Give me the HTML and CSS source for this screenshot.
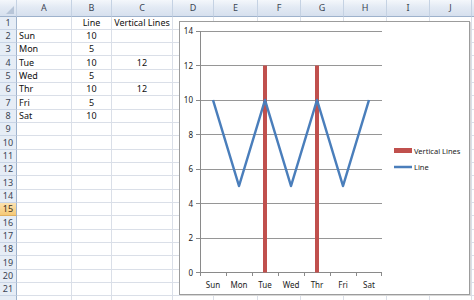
FILE: index.html
```html
<!DOCTYPE html>
<html lang="en">
<head>
  <meta charset="UTF-8" />
  <title>Vertical Lines Chart</title>
  <link rel="stylesheet" href="styles.css">
</head>
<body>
  <div class="workbook">
    <table class="sheet">
      <colgroup>
        <col class="c-head"><col class="c-a"><col class="c-b"><col class="c-c"><col class="c-d"><col class="c-e">
        <col class="c-f"><col class="c-g"><col class="c-h"><col class="c-i"><col class="c-j"><col class="c-k">
      </colgroup>
      <thead>
        <tr><th class="corner"><span class="tri"></span></th><th>A</th><th>B</th><th>C</th><th>D</th><th>E</th><th>F</th><th>G</th><th>H</th><th>I</th><th>J</th><th></th></tr>
      </thead>
      <tbody>
        <tr><th>1</th><td></td><td class="mid">Line</td><td class="mid">Vertical Lines</td><td></td><td></td><td></td><td></td><td></td><td></td><td></td><td></td></tr>
        <tr><th>2</th><td>Sun</td><td class="mid">10</td><td></td><td></td><td></td><td></td><td></td><td></td><td></td><td></td><td></td></tr>
        <tr><th>3</th><td>Mon</td><td class="mid">5</td><td></td><td></td><td></td><td></td><td></td><td></td><td></td><td></td><td></td></tr>
        <tr><th>4</th><td>Tue</td><td class="mid">10</td><td class="mid">12</td><td></td><td></td><td></td><td></td><td></td><td></td><td></td><td></td></tr>
        <tr><th>5</th><td>Wed</td><td class="mid">5</td><td></td><td></td><td></td><td></td><td></td><td></td><td></td><td></td><td></td></tr>
        <tr><th>6</th><td>Thr</td><td class="mid">10</td><td class="mid">12</td><td></td><td></td><td></td><td></td><td></td><td></td><td></td><td></td></tr>
        <tr><th>7</th><td>Fri</td><td class="mid">5</td><td></td><td></td><td></td><td></td><td></td><td></td><td></td><td></td><td></td></tr>
        <tr><th>8</th><td>Sat</td><td class="mid">10</td><td></td><td></td><td></td><td></td><td></td><td></td><td></td><td></td><td></td></tr>
        <tr><th>9</th><td></td><td></td><td></td><td></td><td></td><td></td><td></td><td></td><td></td><td></td><td></td></tr>
        <tr><th>10</th><td></td><td></td><td></td><td></td><td></td><td></td><td></td><td></td><td></td><td></td><td></td></tr>
        <tr><th>11</th><td></td><td></td><td></td><td></td><td></td><td></td><td></td><td></td><td></td><td></td><td></td></tr>
        <tr><th>12</th><td></td><td></td><td></td><td></td><td></td><td></td><td></td><td></td><td></td><td></td><td></td></tr>
        <tr><th>13</th><td></td><td></td><td></td><td></td><td></td><td></td><td></td><td></td><td></td><td></td><td></td></tr>
        <tr><th>14</th><td></td><td></td><td></td><td></td><td></td><td></td><td></td><td></td><td></td><td></td><td></td></tr>
        <tr><th class="selected">15</th><td></td><td></td><td></td><td></td><td></td><td></td><td></td><td></td><td></td><td></td><td></td></tr>
        <tr><th>16</th><td></td><td></td><td></td><td></td><td></td><td></td><td></td><td></td><td></td><td></td><td></td></tr>
        <tr><th>17</th><td></td><td></td><td></td><td></td><td></td><td></td><td></td><td></td><td></td><td></td><td></td></tr>
        <tr><th>18</th><td></td><td></td><td></td><td></td><td></td><td></td><td></td><td></td><td></td><td></td><td></td></tr>
        <tr><th>19</th><td></td><td></td><td></td><td></td><td></td><td></td><td></td><td></td><td></td><td></td><td></td></tr>
        <tr><th>20</th><td></td><td></td><td></td><td></td><td></td><td></td><td></td><td></td><td></td><td></td><td></td></tr>
        <tr><th>21</th><td></td><td></td><td></td><td></td><td></td><td></td><td></td><td></td><td></td><td></td><td></td></tr>
        <tr><th></th><td></td><td></td><td></td><td></td><td></td><td></td><td></td><td></td><td></td><td></td><td></td></tr>
      </tbody>
    </table>

    <!-- chart object floats over the cells -->
    <div class="chart">
      <svg width="289" height="272" viewBox="180 22 289 272">
        <g class="grid">
          <line x1="200" y1="31.5" x2="382" y2="31.5" />
          <line x1="200" y1="65.5" x2="382" y2="65.5" />
          <line x1="200" y1="100.5" x2="382" y2="100.5" />
          <line x1="200" y1="134.5" x2="382" y2="134.5" />
          <line x1="200" y1="169.5" x2="382" y2="169.5" />
          <line x1="200" y1="203.5" x2="382" y2="203.5" />
          <line x1="200" y1="238.5" x2="382" y2="238.5" />
        </g>
        <g class="axis">
          <line x1="200.5" y1="31" x2="200.5" y2="273" />
          <line x1="200" y1="272.5" x2="382" y2="272.5" />
          <path d="M196 31.5h4M196 65.5h4M196 100.5h4M196 134.5h4M196 169.5h4M196 203.5h4M196 238.5h4M196 272.5h4" />
          <path d="M200.5 272v4M226.5 272v4M252.5 272v4M278.5 272v4M304.5 272v4M330.5 272v4M356.5 272v4M381.5 272v4" />
        </g>
        <g class="ylabels">
          <text x="193" y="34">14</text>
          <text x="193" y="68.5">12</text>
          <text x="193" y="103">10</text>
          <text x="193" y="137.5">8</text>
          <text x="193" y="172">6</text>
          <text x="193" y="206.5">4</text>
          <text x="193" y="241">2</text>
          <text x="193" y="275.5">0</text>
        </g>
        <g class="xlabels">
          <text x="213" y="288">Sun</text>
          <text x="239" y="288">Mon</text>
          <text x="265" y="288">Tue</text>
          <text x="291" y="288">Wed</text>
          <text x="317" y="288">Thr</text>
          <text x="343" y="288">Fri</text>
          <text x="369" y="288">Sat</text>
        </g>
        <rect class="bar" x="263" y="65.5" width="4" height="207" />
        <rect class="bar" x="315" y="65.5" width="4" height="207" />
        <polyline class="series" points="213,100 239,186 265,100 291,186 317,100 343,186 369,100" />
        <g class="legend">
          <rect class="bar" x="394" y="148" width="18" height="5" />
          <text x="414" y="153.5">Vertical Lines</text>
          <line class="series" x1="394" y1="167" x2="412" y2="167" />
          <text x="414" y="169.5">Line</text>
        </g>
      </svg>
    </div>
  </div>
</body>
</html>
```
FILE: styles.css
```css
body {
  margin: 0;
  overflow: hidden;
  background: #fff;
  font-family: "Noto Sans", sans-serif;
}

.workbook {
  position: relative;
  width: 474px;
  height: 300px;
  overflow: hidden;
}

.sheet {
  table-layout: fixed;
  border-collapse: separate;
  border-spacing: 0;
  width: 522px;
  font-size: 9px;
  color: #111;
}

.c-head { width: 17px; }
.c-a { width: 55px; }
.c-b { width: 40px; }
.c-c { width: 61px; }
.c-d { width: 41px; }
.c-e { width: 44px; }
.c-f { width: 43px; }
.c-g { width: 43px; }
.c-h { width: 43px; }
.c-i { width: 43px; }
.c-j { width: 42px; }
.c-k { width: 50px; }

.sheet td {
  height: 13.33px;
  padding: 0 0 0 2px;
  box-sizing: border-box;
  border-right: 1px solid #dadfe8;
  border-bottom: 1px solid #dadfe8;
  white-space: nowrap;
  overflow: hidden;
  line-height: 12px;
}

.sheet td.mid {
  text-align: center;
  padding: 0;
}

.sheet th {
  padding: 0;
  font-weight: normal;
  color: #3b4453;
  background: linear-gradient(#eef3fa, #dce6f3);
  border-right: 1px solid #b3c3d8;
  border-bottom: 1px solid #b3c3d8;
  line-height: 12px;
}

.sheet thead th {
  height: 16.5px;
  box-sizing: border-box;
  background: linear-gradient(#f4f7fb 0%, #e3eaf4 45%, #d6e0ee 100%);
  border-right-color: #c5d2e3;
  border-bottom-color: #9eb2cc;
}

.sheet tbody th {
  background: #e6edf6;
  border-bottom-color: #c9d5e6;
  border-right-color: #9eb2cc;
  text-align: center;
}

.sheet tbody th.selected {
  background: linear-gradient(#fbe2b0, #f5c977);
  color: #3a2f1c;
  border-bottom-color: #e0b060;
}

.sheet th.corner {
  position: relative;
}

.tri {
  position: absolute;
  right: 2px;
  bottom: 2px;
  width: 0;
  height: 0;
  border-left: 8px solid transparent;
  border-bottom: 8px solid #b7c5d8;
}

.chart {
  position: absolute;
  left: 179px;
  top: 21px;
  width: 289px;
  height: 272px;
  border: 1px solid #9c9c9c;
  background: #fff;
  box-shadow: 1px 1px 0 #d8d8d8;
}

.chart svg {
  display: block;
  font-family: "Noto Sans", sans-serif;
}

.grid line {
  stroke: #969696;
  stroke-width: 1;
}

.axis line,
.axis path {
  stroke: #8a8a8a;
  stroke-width: 1;
  fill: none;
}

.ylabels text {
  font-size: 8px;
  text-anchor: end;
  fill: #222;
}

.xlabels text {
  font-size: 8px;
  text-anchor: middle;
  fill: #222;
}

.bar {
  fill: #c0504d;
}

.series {
  fill: none;
  stroke: #4a7ebb;
  stroke-width: 2.5;
  stroke-linejoin: round;
}

.legend text {
  font-size: 7.5px;
  fill: #222;
}
```
